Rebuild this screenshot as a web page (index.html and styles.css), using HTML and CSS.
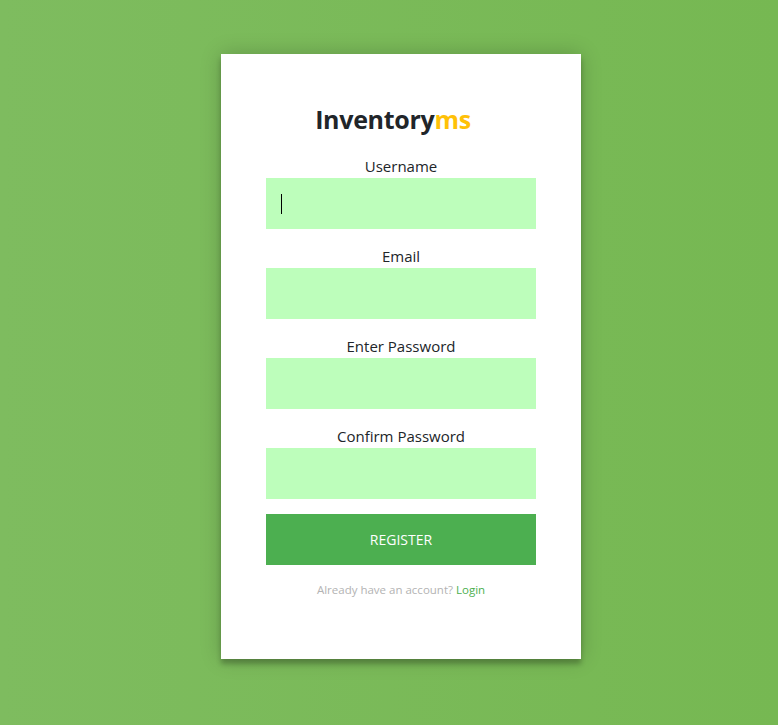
FILE: index.html
```html
<!DOCTYPE html>
<html lang="en">
<head>
<meta charset="utf-8">
<title>Inventoryms - Register</title>
<link rel="stylesheet" href="styles.css">
</head>
<body>
<main class="page">
  <form class="card">
    <h1 class="brand">Inventory<span class="brand-accent">ms</span></h1>
    <label class="field">
      <span class="field-label">Username</span>
      <span class="field-input field-input--focused"><span class="caret"></span></span>
    </label>
    <label class="field">
      <span class="field-label">Email</span>
      <span class="field-input"></span>
    </label>
    <label class="field">
      <span class="field-label">Enter Password</span>
      <span class="field-input"></span>
    </label>
    <label class="field">
      <span class="field-label">Confirm Password</span>
      <span class="field-input"></span>
    </label>
    <button type="button" class="btn">REGISTER</button>
    <p class="message">Already have an account? <a href="#" class="message-link">Login</a></p>
  </form>
</main>
</body>
</html>
```

FILE: styles.css
```css
html, body {
  margin: 0;
  padding: 0;
  height: 100%;
}

body {
  font-family: "Open Sans", "Noto Sans", sans-serif;
  background: linear-gradient(to right, #7ebc5f, #76b852);
  color: #212529;
}

.page {
  display: flex;
  justify-content: center;
  padding-top: 54px;
  padding-left: 24px;
}

.card {
  width: 270px;
  background: #ffffff;
  padding: 45px 45px 61px;
  display: flex;
  flex-direction: column;
  box-shadow: 0 0 20px 0 rgba(0, 0, 0, 0.2), 0 5px 5px 0 rgba(0, 0, 0, 0.24);
}

.brand {
  margin: 0 0 17px;
  padding-right: 16px;
  height: 40px;
  line-height: 40px;
  font-size: 25px;
  font-weight: 700;
  text-align: center;
  color: #212529;
  letter-spacing: -0.3px;
}

.brand-accent {
  color: #ffc107;
}

.field {
  display: flex;
  flex-direction: column;
  margin-bottom: 17px;
}

.field-label {
  display: block;
  height: 20px;
  line-height: 20px;
  font-size: 15px;
  text-align: center;
  color: #212529;
  margin-bottom: 2px;
}

.field-input {
  display: flex;
  align-items: center;
  height: 51px;
  background: #bdfebb;
  padding: 0 15px;
}

.caret {
  display: block;
  width: 1px;
  height: 20px;
  background: #000000;
}

.field:last-of-type {
  margin-bottom: 15px;
}

.btn {
  height: 51px;
  border: 0;
  margin: 0;
  padding: 0;
  background: #4caf50;
  color: #ffffff;
  font-family: inherit;
  font-size: 14px;
  text-transform: uppercase;
}

.message {
  margin: 17px 0 0;
  height: 16px;
  line-height: 16px;
  font-size: 11.5px;
  color: #b3b3b3;
  text-align: center;
}

.message-link {
  color: #4caf50;
  text-decoration: none;
}
```
